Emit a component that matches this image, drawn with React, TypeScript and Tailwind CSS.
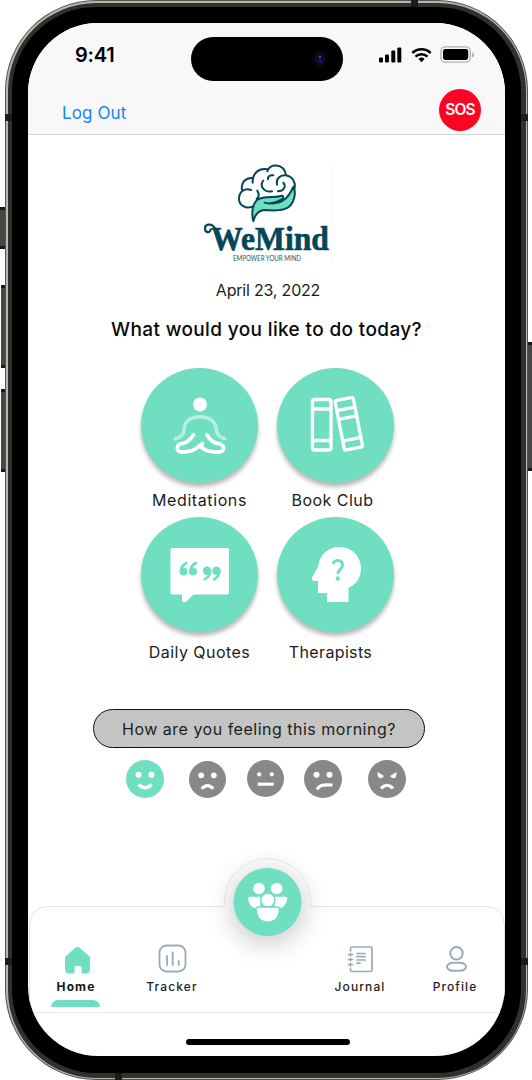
import React from "react";

type BoxProps = { className: string; children: React.ReactNode };

function Disc({ children }: { children: React.ReactNode }) {
  return (
    <div className="h-[115px] w-[117px] rounded-[50%] bg-[#70dec1] shadow-[0_4px_4px_rgba(0,0,0,0.28)]">
      {children}
    </div>
  );
}

function Label({ className, children }: BoxProps) {
  return (
    <div className={"whitespace-nowrap font-['Inter',sans-serif] text-[16px] leading-[20px] font-normal text-[#1c1c1c] " + className}>
      {children}
    </div>
  );
}

function StatusBar() {
  return (
    <div className="flex h-[64px] pl-[47px]">
      <div className="w-[116px] pt-[20px] font-['Inter',sans-serif] text-[20px] leading-[24px] font-semibold tracking-[-0.2px] text-black">
        9:41
      </div>
      <div className="mt-[14px] flex h-[44px] w-[152px] items-center justify-end rounded-full bg-black pr-[14px]">
        <svg width="18" height="18" viewBox="0 0 18 18">
          <circle cx="9" cy="9" r="8.5" fill="#07070b" />
          <circle cx="9" cy="9" r="5" fill="#0d0d2e" />
          <circle cx="9" cy="7" r="1.2" fill="#3848b4" />
          <circle cx="9.5" cy="11.5" r="1.3" fill="#20208c" />
        </svg>
      </div>
      <svg className="mt-[20px] ml-[35px]" width="98" height="22" viewBox="378 43 98 22">
        <g fill="#000">
          <rect x="379" y="57.5" width="4" height="5" rx="1.2" />
          <rect x="385" y="54.5" width="4" height="8" rx="1.2" />
          <rect x="391.3" y="50.5" width="4" height="12" rx="1.2" />
          <rect x="397.3" y="47.5" width="4" height="15" rx="1.2" />
          <path d="M421.5 62.2l-3.1-3.2a4.6 4.6 0 0 1 6.2 0z" />
        </g>
        <path d="M412.3 53a13.3 13.3 0 0 1 18.4 0M415.5 56.6a8.8 8.8 0 0 1 12 0" fill="none" stroke="#000" strokeWidth="2.6" />
        <rect x="440.9" y="46.9" width="29.4" height="15.2" rx="4.4" fill="none" stroke="#b0b0b0" strokeWidth="1.3" />
        <rect x="443" y="49" width="25.2" height="11" rx="2.4" fill="#000" />
        <path d="M472 52.3q2.200 1 2.200 2.600t-2.200 2.600z" fill="#b0b0b0" />
      </svg>
    </div>
  );
}

function Logo() {
  return (
    <svg className="ml-[172px] overflow-visible" width="134" height="118" viewBox="200 150 134 118">
      <path d="M331.5 165v98" stroke="#f4f8f8" strokeWidth="1" />
      <g transform="translate(180 150) scale(.3333)" fill="none" stroke="#064757" strokeWidth="6" strokeLinecap="round" strokeLinejoin="round">
        <path d="M217 170C198 178 177 166 177 146C177 124 196 113 213 120M232 122C238 132 236 142 230 147" />
        <path d="M186 120C182 98 196 82 219 84M218 98C216 72 236 52 263 58M262 64C266 40 312 38 318 76C338 80 350 98 342 120M318 76C298 74 288 88 291 104" />
        <path d="M250 92C238 106 250 128 276 124M310 98C320 110 310 124 294 124M264 88C262 80 270 74 280 76" />
        <path fill="#70dec1" d="M220 214C214 190 216 158 236 147C258 137 282 144 301 138C312 134 312 144 304 149C294 155 284 159 274 160C306 162 327 142 340 110C350 130 342 162 322 174C300 186 276 180 252 180C234 182 224 196 220 214Z" />
        <path d="M274 160Q262 161 254 158" />
      </g>
      <path d="M215 228.500C212 222.500 204.500 224 205 229C205.500 233 210.500 233 210.500 229.500" fill="none" stroke="#064757" strokeWidth="2.200" strokeLinecap="round" />
      <text x="211" y="249.500" textLength="118" lengthAdjust="spacingAndGlyphs" className="font-['Liberation_Serif',serif] text-[33px] font-bold" fill="#064757" stroke="#064757" strokeWidth=".6">WeMind</text>
      <text x="233" y="260.500" textLength="68" lengthAdjust="spacingAndGlyphs" className="font-['Lato',sans-serif] text-[7px]" fill="#1d5967">EMPOWER YOUR MIND</text>
    </svg>
  );
}

function Meditation() {
  return (
    <svg width="117" height="115" viewBox="141 368 117 115" fill="none" strokeLinecap="round" strokeLinejoin="round">
      <circle cx="200" cy="404.500" r="6.900" fill="#fff" />
      <path d="M175.500 438.700C181 437 183.500 435 184 430C184.500 421 191 416.800 200 416.800S215.500 421 216.500 430C217 435 219 437 224.500 438.700" stroke="#b8efe0" strokeWidth="3.600" />
      <path d="M193.500 435C190 440 187 443 182 443.500C176 444.500 175.500 452 182 452C193 452 195 449.500 202.500 443.500M207 435C210 440 214 443 218 443.500C226 445 225 452 218 452C208 452 205 450.500 200.500 446.500" stroke="#fff" strokeWidth="3.800" />
    </svg>
  );
}

function Books() {
  return (
    <svg width="117" height="115" viewBox="277.500 368 117 115" fill="none" stroke="#fff" strokeWidth="3.300" strokeLinejoin="round">
      <rect x="313" y="399.500" width="18.500" height="50.500" rx="2" />
      <path d="M313 409h18.500M313 440.500h18.500" />
      <g transform="rotate(-11 349.500 423.500)">
        <rect x="340" y="398.500" width="18.500" height="50.500" rx="2" />
        <path d="M340 408.500h18.500M340 417.500h18.500M340 439.500h18.500" />
      </g>
    </svg>
  );
}

function Quotes() {
  return (
    <svg width="117" height="115" viewBox="141 517 117 115">
      <path d="M172.500 548h54.500q2 0 2 2v42.500q0 2-2 2h-33.500l-6.500 6.500q-4.500 3-5-1v-5.500h-9.500q-2 0-2-2V550q0-2 2-2z" fill="#fff" />
      <g fill="none" stroke="#70dec1" strokeWidth="2.600" strokeLinecap="round">
        <path d="M186.300 563Q181 566 181 571M195.800 563Q190.500 566 190.500 571M204.700 579.300Q210 576.500 210 571M214 579.300Q219.300 576.500 219.300 571" />
      </g>
      <g fill="#70dec1">
        <circle cx="183.500" cy="571.500" r="4" />
        <circle cx="193" cy="571.500" r="4" />
        <circle cx="207" cy="570.800" r="4.200" />
        <circle cx="216.400" cy="570.800" r="4.200" />
      </g>
    </svg>
  );
}

function HeadIcon() {
  return (
    <svg width="117" height="115" viewBox="277 517 117 115">
      <path d="M348.500 602H327V593H318V581H313.500Q311.500 580 312 577.500L318 567C320 553 329 547 339.500 547C352 547 361 556.500 361 568.500C361 577 357 584 348.500 588Z" fill="#fff" />
      <path d="M333 564C334.500 558.500 343.500 559.500 342.500 565.500C342 569.500 337.800 570 337.800 574" fill="none" stroke="#70dec1" strokeWidth="3" />
      <circle cx="337.800" cy="578.500" r="2.200" fill="#70dec1" />
    </svg>
  );
}

const mouths = {
  smile: "M12.500 24.500Q19 31 25.500 24.500",
  sad: "M13 28.500Q19 22 25 28.500",
  flat: "M11 24.800H27.500",
  skeptic: "M13 29.500C16 24 19 25 28.500 25",
  angry: "M13 28.500Q19 22 25 28.500",
};

function Face({ kind, className }: { kind: keyof typeof mouths; className: string }) {
  return (
    <svg className={className} viewBox="0 0 38 38">
      <circle cx="19" cy="19" r="19" fill={kind === "smile" ? "#70dec1" : "#888888"} />
      {kind === "angry" ? (
        <path d="M9.500 12l6.500 4q-3 3.500-5.500 1.500q-1.300-1.500-1-5.500zM28.500 12l-6.500 4q3 3.500 5.500 1.500q1.300-1.500 1-5.500z" fill="#fff" />
      ) : (
        <g fill="#fff">
          <circle cx="12.500" cy="14.700" r={kind === "flat" ? 2.2 : 3} />
          <circle cx="25.500" cy="14.700" r={kind === "flat" ? 2.2 : 3} />
        </g>
      )}
      <path d={mouths[kind]} fill="none" stroke="#fff" strokeWidth="3.200" />
    </svg>
  );
}

function NavItem({ className, children }: BoxProps) {
  return (
    <div className={"flex flex-col items-center font-['Inter',sans-serif] text-[12px] leading-[16px] tracking-[1.1px] " + className}>
      {children}
    </div>
  );
}

function NavBar() {
  return (
    <div className="relative mt-[57px] h-[201px]">
      <svg className="absolute top-0 left-0 overflow-visible" width="477" height="201" viewBox="28 855 477 201">
        <defs>
          <filter id="glow" x="-80%" y="-80%" width="260%" height="260%">
            <feGaussianBlur stdDeviation="13" />
          </filter>
        </defs>
        <circle cx="267.500" cy="907" r="37" fill="#000" opacity=".2" filter="url(#glow)" />
        <path d="M29.500 1012V926Q30 906.500 49 906.500H224.500V901.500A43 43 0 0 1 310.500 901.500V906.500H486Q504.500 907 504.500 926V1012" fill="none" stroke="#e3e3e3" strokeWidth="1" />
        <path d="M28 1012.500H505" stroke="#e9e9e9" />
        <circle cx="267.500" cy="902" r="34" fill="#70dec1" />
        <g fill="#fff" stroke="#70dec1" strokeWidth="1.400">
          <path d="M250 896H261V909H256C250 908.500 247.500 902 247.500 898Q247.800 896 250 896ZM274 896H285.500Q288 896 288 898C288 902 285 908.500 279 909H274Z" />
          <circle cx="259" cy="888.500" r="6.500" />
          <circle cx="276.700" cy="888.500" r="6.500" />
          <circle cx="267.800" cy="900" r="7" />
          <path d="M258.500 907H277Q279.500 907 279.500 909.500C279 917 275 922 267.800 922S256.500 917 256 909.500Q256 907 258.500 907Z" />
        </g>
      </svg>
      <div className="relative flex pt-[89px]">
        <NavItem className="ml-[18px] w-[60px] font-bold text-[#151515]">
          <svg className="mr-[-2px]" width="30" height="30" viewBox="0 0 30 30">
            <path d="M4.500 11.500L13.200 4Q15.500 2 17.800 4L26.500 11.500Q28 12.500 28 14.500V25Q28 29.500 24 29.500H19.500V24Q19.500 22 17.500 22H14.500Q12.500 22 12.500 24V29.500H7Q3 29.500 3 25V14.500Q3 12.500 4.500 11.500Z" fill="#70dec1" />
          </svg>
          <span className="mt-[5px]">Home</span>
          <div className="mt-[5px] mr-[2px] h-[7px] w-[49px] rounded-t-[7px] bg-[#70dec1]" />
        </NavItem>
        <NavItem className="ml-[36px] w-[60px] font-medium text-[#222222]">
          <svg width="30" height="30" viewBox="0 0 30 30" fill="none" stroke="#9ba9b9" strokeWidth="1.800" strokeLinecap="round">
            <rect x="2.500" y="1.500" width="26" height="26" rx="7" />
            <path d="M10 12v9M15.700 8.500v12.500M21.700 17v4" />
          </svg>
          <span className="mt-[5px]">Tracker</span>
        </NavItem>
        <NavItem className="ml-[128px] w-[60px] font-medium text-[#222222]">
          <svg width="30" height="30" viewBox="0 0 30 30" fill="none" stroke="#9ba9b9" strokeWidth="1.700" strokeLinecap="round">
            <path d="M5.500 7V4.500Q5.500 3 7 3H25.500Q27 3 27 4.500V26Q27 27.500 25.500 27.500H7Q5.500 27.500 5.500 26V24.500M3.500 10.500H7.500M3.500 15.500H7.500M3.500 20.500H7.500M5.500 9.500v2.500M5.500 14.500v2.500M5.500 19.500v2.500M12 9.500h8M12 12.700h8M12 16h8M12 19.200h3" />
          </svg>
          <span className="mt-[5px]">Journal</span>
        </NavItem>
        <NavItem className="ml-[35px] w-[60px] font-medium text-[#222222]">
          <svg className="mr-[-1px]" width="30" height="30" viewBox="0 0 30 30" fill="none" stroke="#9ba9b9" strokeWidth="2">
            <circle cx="15.500" cy="9.300" r="6.200" />
            <rect x="6" y="18.800" width="19" height="8" rx="6" ry="4" />
          </svg>
          <span className="mt-[5px]">Profile</span>
        </NavItem>
      </div>
      <div className="absolute top-[184px] left-[158px] h-[6px] w-[164px] rounded-full bg-black" />
    </div>
  );
}

function Screen() {
  return (
    <div className="h-[1033px] w-[477px] overflow-hidden rounded-[70px] bg-white">
      <header className="h-[112px] border-b border-[#d3d3d3] bg-[#f8f8f8]">
        <StatusBar />
        <div className="flex justify-between pr-[24px] pl-[34px]">
          <div className="pt-[14px] font-['Inter',sans-serif] text-[17px] leading-[24px] tracking-[0.1px] text-[#1186f5]">Log Out</div>
          <div className="mt-[2px] flex h-[42px] w-[42px] items-center justify-center rounded-full bg-[#fc0422] font-['Inter',sans-serif] text-[15.5px] font-semibold tracking-[-0.9px] text-white">
            SOS
          </div>
        </div>
      </header>
      <div className="h-[15px]" />
      <Logo />
      <Label className="mt-[12px] text-center indent-[3px] tracking-[-0.2px]">April 23, 2022</Label>
      <h1 className="mt-[17px] text-center font-['Inter',sans-serif] text-[19px] leading-[26px] font-medium tracking-[0.36px] whitespace-nowrap text-[#080808]">
        What would you like to do today?
      </h1>
      <div className="mt-[25px] ml-[113px] grid grid-cols-[117px_117px] gap-x-[19px]">
        <Disc><Meditation /></Disc>
        <Disc><Books /></Disc>
        <Label className="mt-[7px] mb-[7px] text-center tracking-[0.6px]">Meditations</Label>
        <Label className="mt-[7px] mb-[7px] pr-[6px] text-center tracking-[0.45px]">Book Club</Label>
        <Disc><Quotes /></Disc>
        <Disc><HeadIcon /></Disc>
        <Label className="mt-[10px] text-center tracking-[0.45px]">Daily Quotes</Label>
        <Label className="mt-[10px] pr-[10px] text-center tracking-[0.35px]">Therapists</Label>
      </div>
      <div className="mt-[47px] ml-[65px] flex h-[39px] w-[332px] items-center justify-center rounded-full border-[1.5px] border-[#111] bg-[#c4c4c4]">
        <Label className="tracking-[0.5px]">How are you feeling this morning?</Label>
      </div>
      <div className="mt-[12px] flex h-[38px] items-center pl-[98px]">
        <Face kind="smile" className="size-[38px]" />
        <Face kind="sad" className="mt-px ml-[25px] size-[37px]" />
        <Face kind="flat" className="mb-px ml-[21px] size-[37px]" />
        <Face kind="skeptic" className="ml-[20px] size-[38px]" />
        <Face kind="angry" className="ml-[26px] size-[38px]" />
      </div>
      <NavBar />
    </div>
  );
}

function SideKey({ className }: { className: string }) {
  return <div className={"absolute border-y-[3px] border-[#171717] bg-[#454744] " + className} />;
}

export default function App() {
  return (
    <main className="relative h-[1080px] w-[532px] overflow-hidden bg-white pl-[5px]">
      <SideKey className="top-[207px] left-0 h-[42px] w-[6px]" />
      <SideKey className="top-[285px] left-[1px] h-[83px] w-[6px]" />
      <SideKey className="top-[389px] left-[1px] h-[83px] w-[6px]" />
      <SideKey className="top-[342px] left-[527px] h-[129px] w-[5px]" />
      <div className="relative h-[1080px] w-[523px] rounded-[91px] bg-[#51534f] p-px">
        <div className="h-full rounded-[90px] bg-[#bbb5aa] p-[1.5px]">
          <div className="h-full rounded-[88px] bg-[#30312e] p-[4.5px]">
            <div className="h-full rounded-[84px] bg-black p-[16px]">
              <Screen />
            </div>
          </div>
        </div>
        <div className="absolute top-[114px] left-0 h-[7px] w-[7px] bg-[#1c1c1c]" />
        <div className="absolute top-[114px] right-0 h-[7px] w-[7px] bg-[#1c1c1c]" />
        <div className="absolute top-[958px] left-0 h-[7px] w-[7px] bg-[#1c1c1c]" />
        <div className="absolute top-[958px] right-0 h-[7px] w-[7px] bg-[#1c1c1c]" />
        <div className="absolute top-0 left-[406px] h-[7px] w-[7px] bg-[#1c1c1c]" />
        <div className="absolute bottom-0 left-[110px] h-[7px] w-[7px] bg-[#1c1c1c]" />
      </div>
    </main>
  );
}
